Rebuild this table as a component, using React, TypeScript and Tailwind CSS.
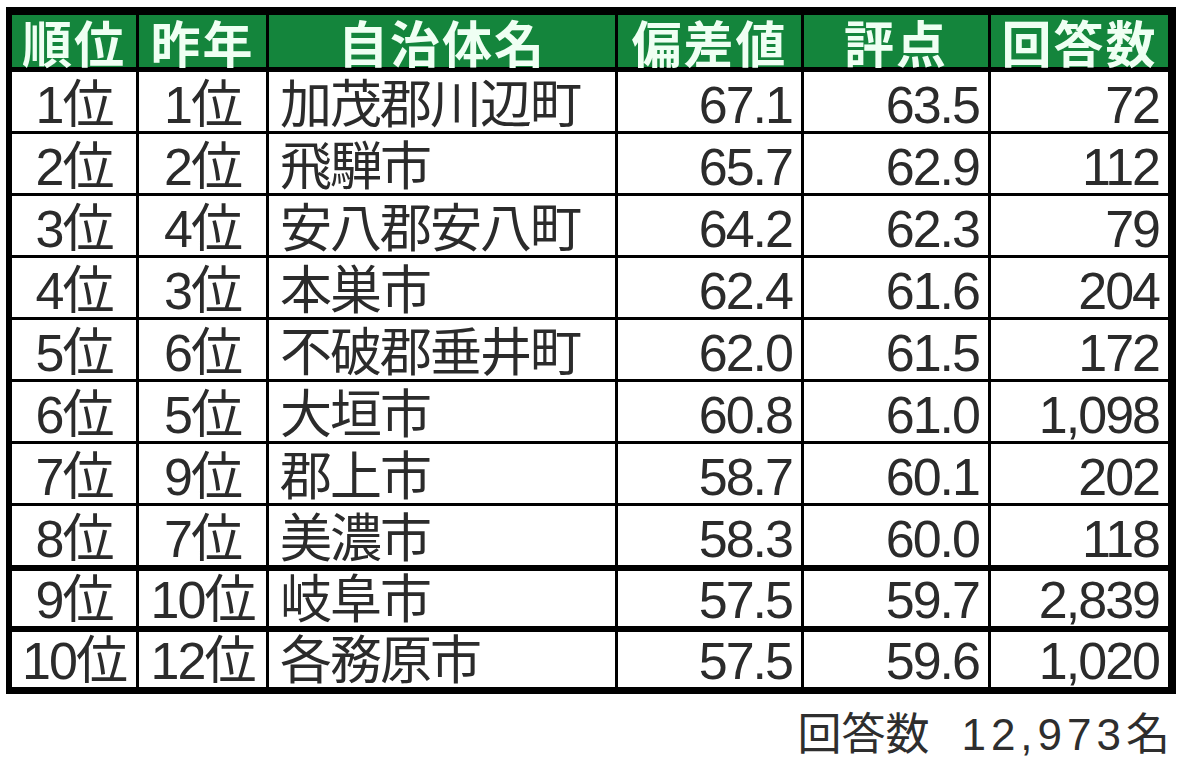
import React from 'react'

type Row = { rank: string; prev: string; name: string; dev: string; score: string; count: string }

const rows: Row[] = [
    { rank: '1位', prev: '1位', name: '加茂郡川辺町', dev: '67.1', score: '63.5', count: '72' },
    { rank: '2位', prev: '2位', name: '飛騨市', dev: '65.7', score: '62.9', count: '112' },
    { rank: '3位', prev: '4位', name: '安八郡安八町', dev: '64.2', score: '62.3', count: '79' },
    { rank: '4位', prev: '3位', name: '本巣市', dev: '62.4', score: '61.6', count: '204' },
    { rank: '5位', prev: '6位', name: '不破郡垂井町', dev: '62.0', score: '61.5', count: '172' },
    { rank: '6位', prev: '5位', name: '大垣市', dev: '60.8', score: '61.0', count: '1,098' },
    { rank: '7位', prev: '9位', name: '郡上市', dev: '58.7', score: '60.1', count: '202' },
    { rank: '8位', prev: '7位', name: '美濃市', dev: '58.3', score: '60.0', count: '118' },
    { rank: '9位', prev: '10位', name: '岐阜市', dev: '57.5', score: '59.7', count: '2,839' },
    { rank: '10位', prev: '12位', name: '各務原市', dev: '57.5', score: '59.6', count: '1,020' },
]

const cols = 'grid grid-cols-[124px_127px_346px_183px_184px_177px] gap-x-[3px]'
const font = "font-['Liberation_Sans','Noto_Sans_CJK_JP',sans-serif]"

const Cell = ({ children, align }: { children: React.ReactNode; align: 'center' | 'left' | 'right' }) => {
    const a = align === 'center' ? 'justify-center' : align === 'left' ? 'justify-start pl-[11px]' : 'justify-end pr-[9px]'
    return (
        <div className={`flex items-end bg-white ${a}`}>
            <span className="leading-none tracking-[-2px] text-[52px] text-[#2b2b2b]">{children}</span>
        </div>
    )
}

const App = () => {
    return (
        <div className={`min-h-[770px] w-[1200px] bg-white pt-[7px] pl-[6px] ${font}`}>
            {/* table */}
            <div className="flex w-[1170px] flex-col bg-black pt-[8px] pr-[8px] pb-[7px] pl-[6px]">
                {/* header */}
                <div className={`${cols} h-[52px]`}>
                    {['順位', '昨年', '自治体名', '偏差値', '評点', '回答数'].map(h => (
                        <div key={h} className="flex items-center justify-center bg-[#14853c]">
                            <span className="font-['Noto_Sans_CJK_JP',sans-serif] text-[50px] font-bold leading-none tracking-[2px] text-[#effff3]">{h}</span>
                        </div>
                    ))}
                </div>

                <div className="mt-[5px] flex flex-col gap-y-[3px]">
                    {rows.slice(0, 8).map(r => (
                        <div key={r.rank} className={`${cols} h-[59px]`}>
                            <Cell align="center">{r.rank}</Cell>
                            <Cell align="center">{r.prev}</Cell>
                            <Cell align="left">{r.name}</Cell>
                            <Cell align="right">{r.dev}</Cell>
                            <Cell align="right">{r.score}</Cell>
                            <Cell align="right">{r.count}</Cell>
                        </div>
                    ))}
                </div>

                {/* last two rows have thick rules */}
                <div className="mt-[6px] flex flex-col gap-y-[6px]">
                    {rows.slice(8).map(r => (
                        <div key={r.rank} className={`${cols} h-[55px]`}>
                            <Cell align="center">{r.rank}</Cell>
                            <Cell align="center">{r.prev}</Cell>
                            <Cell align="left">{r.name}</Cell>
                            <Cell align="right">{r.dev}</Cell>
                            <Cell align="right">{r.score}</Cell>
                            <Cell align="right">{r.count}</Cell>
                        </div>
                    ))}
                </div>
            </div>

            {/* footer */}
            <div className="mt-[19px] flex w-[1164px] justify-end">
                <span className="text-[44px] leading-none text-[#2e2e2e]">
                    回答数<span className="ml-[32px] tracking-[5px]">12,973</span>名
                </span>
            </div>
        </div>
    )
}

export default App
